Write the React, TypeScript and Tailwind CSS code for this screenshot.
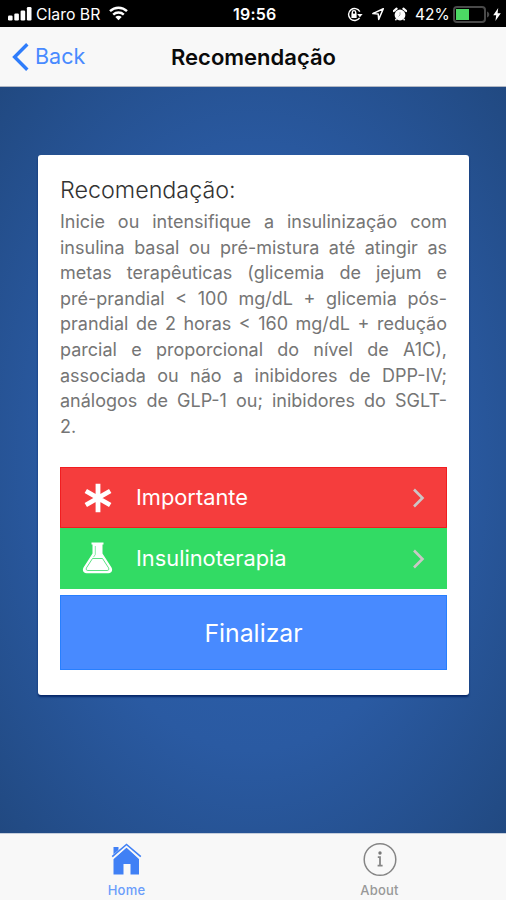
import type { ReactNode } from "react";

const recommendation = [
  "Inicie ou intensifique a insulinização com",
  "insulina basal ou pré-mistura até atingir as",
  "metas terapêuticas (glicemia de jejum e",
  "pré-prandial < 100 mg/dL + glicemia pós-",
  "prandial de 2 horas < 160 mg/dL + redução",
  "parcial e proporcional do nível de A1C),",
  "associada ou não a inibidores de DPP-IV;",
  "análogos de GLP-1 ou; inibidores do SGLT-",
];

function StatusBar() {
  return (
    <div className="grid h-[27px] shrink-0 grid-cols-[1fr_auto_1fr] items-center bg-black pt-px text-white">
      <div className="flex items-center pl-2">
        <svg width="24" height="14" viewBox="0 0 24 14" fill="currentColor">
          <rect x="0" y="8.5" width="4.6" height="5" rx="1.2" />
          <rect x="6.3" y="6.5" width="4.6" height="7" rx="1.2" />
          <rect x="12.6" y="3.5" width="4.6" height="10" rx="1.2" />
          <rect x="18.9" y="0" width="4.6" height="13.5" rx="1.2" />
        </svg>
        <span className="ml-[4px] w-[66px] whitespace-nowrap pt-px text-[15.8px] leading-none">Claro BR</span>
        <svg className="ml-[7px]" width="19" height="15" viewBox="0 0 19 15" fill="none" stroke="currentColor" strokeWidth="2.4">
          <path d="M1 5.2C5.8.6 13.2.6 18 5.2" />
          <path d="M4.2 8.6c3-2.8 7.600-2.800 10.600 0" />
          <path d="M9.500 14.200 6.300 11c1.800-1.700 4.600-1.700 6.400 0z" fill="currentColor" stroke="none" />
        </svg>
      </div>
      <span className="w-[46px] pl-[3px] text-center text-[16px] font-semibold leading-none tracking-[0.2px]">19:56</span>
      <div className="flex items-center justify-end pr-[5px]">
        <svg width="16" height="15" viewBox="0 0 16 15" fill="none" stroke="currentColor" strokeWidth="1.400">
          <path d="M12.600 10.800A6 6 0 1 1 12.800 4.600" />
          <path d="M10.200 7h5.400l-2.700 3.200z" fill="currentColor" stroke="none" />
          <rect x="4.400" y="6.600" width="5.200" height="4.400" fill="currentColor" stroke="none" />
          <path d="M5.300 7V5.300a1.700 1.700 0 0 1 3.400 0V7" />
        </svg>
        <svg className="ml-[8px]" width="14" height="14" viewBox="0 0 14 14" fill="none" stroke="currentColor" strokeWidth="1.500" strokeLinejoin="round">
          <path d="M12.300 1.800 1.800 6.600l5.400.4.500 5.400z" />
        </svg>
        <svg className="ml-[8px]" width="14" height="15" viewBox="0 0 14 15" fill="none" stroke="currentColor">
          <circle cx="7" cy="8" r="5.400" fill="currentColor" stroke="none" />
          <path d="M.8 4 3.600 1.600M13.200 4l-2.800-2.400" strokeWidth="2.200" strokeLinecap="round" />
          <path d="m3.400 12-1 1.200m8.200-1.200 1 1.200" strokeWidth="1.500" />
          <path d="M7 5.200V8l-1.500 1.500" stroke="#aaa" strokeWidth="1" />
        </svg>
        <span className="ml-[8px] w-[34px] whitespace-nowrap pt-px text-[15.500px] leading-none">42%</span>
        <svg className="ml-[4px]" width="37" height="17" viewBox="0 0 37 17" fill="none">
          <rect x="1" y="1" width="31" height="15" rx="3" stroke="#4a4a4a" strokeWidth="2" />
          <rect x="3" y="3" width="13" height="11" fill="#4cd964" />
          <path d="M34 5.500c3 1.200 3 4.800 0 6z" fill="#4a4a4a" />
        </svg>
        <svg className="ml-[3px]" width="8" height="13" viewBox="0 0 8 13" fill="currentColor">
          <path d="M5.200 0 .2 7.300h3L2.400 13l5.400-7.700H4.600z" />
        </svg>
      </div>
    </div>
  );
}

function Chevron() {
  return (
    <svg width="13" height="20" viewBox="0 0 13 20" fill="none" stroke="#cbc6c6" strokeWidth="2.600">
      <path d="m2 1.500 8.500 8.500L2 18.500" />
    </svg>
  );
}

function Row({ className, icon, label }: { className: string; icon: ReactNode; label: string }) {
  return (
    <button className={`flex h-[61px] w-full items-center border pr-[21px] pl-[21px] text-left text-white ${className}`}>
      <span className="flex w-[31px] justify-center">{icon}</span>
      <span className="ml-[23px] flex-1 pt-px text-[21.8px] leading-none">{label}</span>
      <Chevron />
    </button>
  );
}

export default function App() {
  return (
    <div className="flex h-[900px] w-[506px] flex-col overflow-hidden bg-[#f8f8f8] font-['Inter',sans-serif]">
      <StatusBar />
      <header className="grid h-[60px] shrink-0 grid-cols-[1fr_auto_1fr] items-center border-b border-[#b2b8c4] bg-[#f8f8f8]">
        <div className="flex items-center pl-3 text-[#488aff]">
          <svg width="17" height="28" viewBox="0 0 17 28" fill="none" stroke="#2f7dfb" strokeWidth="3.400">
            <path d="M15.300 1.300 2.600 14l12.700 12.700" />
          </svg>
          <span className="ml-[6px] pt-px text-[21.500px] leading-none">Back</span>
        </div>
        <h1 className="pl-px text-[22px] font-semibold leading-none text-[#0a0a0a]">Recomendação</h1>
      </header>

      <main className="flex h-[746px] shrink-0 flex-col bg-[radial-gradient(ellipse_at_center,#2d62b0_0%,#2a5aa2_55%,#214981_100%)] pt-[68px] pr-[37px] pl-[38px]">
        <section className="flex h-[540px] flex-col rounded-[3px] bg-white px-[22px] pt-[22px] shadow-[0_2px_2px_#07296a]">
          <h2 className="h-[27px] whitespace-nowrap text-[23.3px] font-light leading-[26px] text-[#333]">Recomendação:</h2>
          <div className="mt-[5px] h-[231px] text-[18px] font-normal leading-[25.600px] text-[#757575]">
            {recommendation.map((line) => (
              <p key={line} className="whitespace-nowrap [text-align-last:justify]">{line}</p>
            ))}
            <p>2.</p>
          </div>
          <div className="mt-[27px] flex flex-col">
            <Row
              className="border-[#f21d20] bg-[#f53d3d]"
              label="Importante"
              icon={
                <svg width="28" height="30" viewBox="0 0 28 30" stroke="white" strokeWidth="4.800">
                  <path d="M14 .8v28.400M1.800 8l24.400 14M26.200 8 1.800 22" />
                </svg>
              }
            />
            <Row
              className="border-[#32db64] bg-[#32db64]"
              label="Insulinoterapia"
              icon={
                <svg width="31" height="33" viewBox="0 0 31 33" fill="none">
                  <path d="M10.500 2h10v9.500l9 14c1.700 3-.2 5.800-3.200 5.800H4.700c-3 0-4.900-2.800-3.200-5.800l9-14z" fill="white" />
                  <path d="M9.500 1.500h12" stroke="white" strokeWidth="2" />
                  <path d="m10.500 16.500-6 9.300c-.8 1.600-.1 2.700 1.300 2.700h19.400c1.400 0 2.100-1.100 1.300-2.700l-6-9.300z" stroke="#32db64" strokeWidth=".8" />
                  <path d="M13.300 4v8.500l-1.800 2.700" stroke="#32db64" strokeWidth=".6" />
                </svg>
              }
            />
            <button className="mt-[6px] h-[75px] border border-[#277fff] bg-[#488aff] pt-0.5 text-[24.800px] text-white">Finalizar</button>
          </div>
        </section>
      </main>

      <nav className="grid min-h-0 flex-1 grid-cols-2 border-t border-[#c5cedc] bg-[#f8f8f8] text-[13px] font-medium tracking-[0.2px]">
        <div className="flex flex-col items-center pt-[9px] text-[#6a9dfb]">
          <svg width="31" height="33" viewBox="0 0 31 33" fill="none">
            <path d="M2.500 4h5v6l-5 4z" fill="#4080f5" />
            <path d="M15.500 4.500 28 16v15.500h-8.500V21h-7v10.500H2.500V16z" fill="#4080f5" />
            <path d="m1 15 14.500-12.700 14.500 12.700" stroke="#f8f8f8" strokeWidth="3.400" />
            <path d="m1.200 13.700 14.300-12.200 14.300 12.200" stroke="#4080f5" strokeWidth="1.600" />
          </svg>
          <span className="mt-[6px] leading-4">Home</span>
        </div>
        <div className="flex flex-col items-center pt-[8px] text-[#999]">
          <svg width="34" height="35" viewBox="0 0 34 35" fill="none" stroke="#858585">
            <circle cx="17" cy="17.500" r="15.800" strokeWidth="1.500" />
            <circle cx="17" cy="11" r="1.700" fill="#777" stroke="none" />
            <path d="M14.800 15.200H17v8M14.600 23.700h5" strokeWidth="1.800" />
          </svg>
          <span className="mt-[5px] leading-4">About</span>
        </div>
      </nav>
    </div>
  );
}
